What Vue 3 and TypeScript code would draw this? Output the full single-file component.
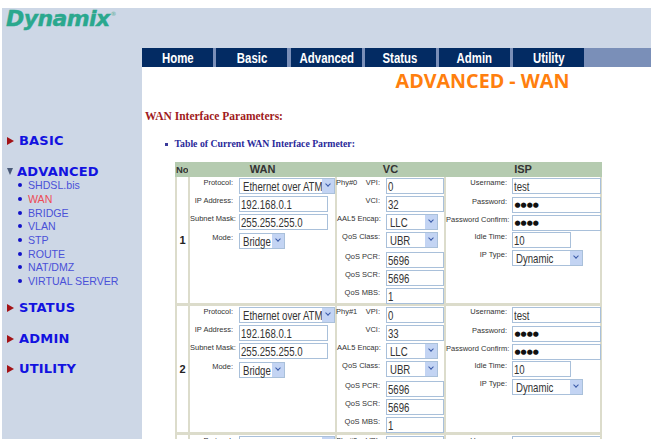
<script setup lang="ts">
interface Row { no: number; phy: string; vci: string }
const rows: Row[] = [
  { no: 1, phy: 'Phy#0', vci: '32' },
  { no: 2, phy: 'Phy#1', vci: '33' }
]
const tabs = ['Home', 'Basic', 'Advanced', 'Status', 'Admin', 'Utility']
const sub = ['SHDSL.bis', 'WAN', 'BRIDGE', 'VLAN', 'STP', 'ROUTE', 'NAT/DMZ', 'VIRTUAL SERVER']
</script>

<template>
  <div class="page">
    <aside class="side">
      <div class="logo">Dynamix<sup>®</sup></div>
      <nav class="menu">
        <div class="group"><span class="tri"></span>BASIC</div>
        <div class="group open"><span class="tri down"></span>ADVANCED</div>
        <ul class="sub">
          <li v-for="s in sub" :key="s" :class="{ active: s === 'WAN' }"><span class="dot"></span>{{ s }}</li>
        </ul>
        <div class="group after"><span class="tri"></span>STATUS</div>
        <div class="group"><span class="tri"></span>ADMIN</div>
        <div class="group"><span class="tri"></span>UTILITY</div>
      </nav>
    </aside>
    <main class="main">
      <div class="topband"></div>
      <div class="tabs">
        <div v-for="t in tabs" :key="t" class="tab"><span>{{ t }}</span></div>
      </div>
      <h1 class="title">ADVANCED - WAN</h1>
      <h2 class="section">WAN Interface Parameters:</h2>
      <h3 class="subhead"><span class="sq"></span>Table of Current WAN Interface Parmeter:</h3>
      <div class="grid">
        <div class="th no">No</div>
        <div class="th">WAN</div>
        <div class="th">VC</div>
        <div class="th">ISP</div>
        <template v-for="r in rows" :key="r.no">
          <div class="cell num">{{ r.no }}</div>
          <div class="cell wan">
            <label>Protocol:</label><div class="sel w-proto"><span class="val">Ethernet over ATM</span><i></i></div>
            <label>IP Address:</label><div class="inp w-ip"><span class="val">192.168.0.1</span></div>
            <label>Subnet Mask:</label><div class="inp w-ip"><span class="val">255.255.255.0</span></div>
            <label>Mode:</label><div class="sel w-mode"><span class="val">Bridge</span><i></i></div>
          </div>
          <div class="cell vc">
            <label><span class="phy">{{ r.phy }}</span>VPI:</label><div class="inp w-vc"><span class="val">0</span></div>
            <label>VCI:</label><div class="inp w-vc"><span class="val">{{ r.vci }}</span></div>
            <label>AAL5 Encap:</label><div class="sel w-enc"><span class="val">LLC</span><i></i></div>
            <label>QoS Class:</label><div class="sel w-enc"><span class="val">UBR</span><i></i></div>
            <label>QoS PCR:</label><div class="inp w-vc"><span class="val">5696</span></div>
            <label>QoS SCR:</label><div class="inp w-vc"><span class="val">5696</span></div>
            <label>QoS MBS:</label><div class="inp w-vc"><span class="val">1</span></div>
          </div>
          <div class="cell isp">
            <label>Username:</label><div class="inp w-isp"><span class="val">test</span></div>
            <label>Password:</label><div class="inp w-isp pw">●●●●</div>
            <label>Password Confirm:</label><div class="inp w-isp pw">●●●●</div>
            <label>Idle Time:</label><div class="inp w-idle"><span class="val">10</span></div>
            <label>IP Type:</label><div class="sel w-type"><span class="val">Dynamic</span><i></i></div>
          </div>
        </template>
        <div class="cell num stub"></div>
        <div class="cell wan stub">
          <label>Protocol:</label><div class="sel w-proto"><i></i></div>
        </div>
        <div class="cell vc stub">
          <label><span class="phy">Phy#2</span>VPI:</label><div class="inp w-vc"></div>
        </div>
        <div class="cell isp stub">
          <label>Username:</label><div class="inp w-isp"></div>
        </div>
      </div>
    </main>
  </div>
</template>

<style>
html, body { margin: 0; background: #fff; overflow: hidden; }
</style>

<style scoped>
.page {
  width: 651px;
  height: 439px;
  display: flex;
  padding: 8px 0 0 2px;
  box-sizing: border-box;
  overflow: hidden;
  font-family: "Liberation Sans", Arial, sans-serif;
}
.side { width: 140px; height: 431px; background: #cdd7e6; flex: none; }
.logo {
  font: italic 700 22px/22px "DejaVu Sans", sans-serif;
  color: #2aa88e;
  -webkit-text-stroke: 0.4px #2aa88e;
  padding-left: 4px;
  letter-spacing: -0.6px;
}
.logo sup { font-size: 6px; color: #7fb9ad; vertical-align: 10px; line-height: 0; margin-left: 1px; -webkit-text-stroke: 0; }
.menu { padding-top: 103px; }
.group {
  display: flex;
  align-items: center;
  height: 16px;
  margin-bottom: 14.5px;
  padding-left: 5px;
  font: 700 13px/16px "DejaVu Sans", sans-serif;
  color: #1212e0;
  letter-spacing: 0.2px;
}
.group.open { margin-bottom: 0; }
.group.after { margin-top: 12px; }
.tri {
  width: 0; height: 0;
  border-left: 7px solid #a31216;
  border-top: 4px solid transparent;
  border-bottom: 4px solid transparent;
  margin-right: 5px;
}
.tri.down {
  border-left: 3.5px solid transparent;
  border-right: 3.5px solid transparent;
  border-top: 7px solid #4a5a78;
  border-bottom: 0;
  margin-right: 4px;
}
.sub { list-style: none; margin: -1px 0 0; padding: 0 0 0 16px; }
.sub li {
  display: flex;
  align-items: center;
  height: 13.7px;
  font-size: 10.6px;
  color: #4a50d8;
}
.sub li.active { color: #ee4b55; }
.dot { width: 4px; height: 4px; border-radius: 50%; background: #1212c8; margin-right: 6px; flex: none; }
.main { flex: 1; min-width: 0; overflow: hidden; height: 431px; }
.topband { height: 40px; background: #cdd7e6; }
.tabs { display: flex; gap: 3.3px; height: 19px; background: #7a8fb8; }
.tab {
  width: 71px;
  background: #032b63;
  color: #fff;
  text-align: center;
  font: 700 15px/19px "Liberation Sans", sans-serif;
}
.tab span { display: inline-block; transform: scaleX(0.76); }
.title {
  margin: 0;
  padding: 4px 0 0 172px;
  height: 28px;
  box-sizing: border-box;
  text-align: center;
  font: 700 19.7px/20px "Open Sans", sans-serif;
  color: #ff7f0e;
}
.section {
  margin: 14px 0 0 3px;
  font: 700 11.5px/14px "Liberation Serif", serif;
  color: #a01a20;
}
.subhead {
  display: flex;
  align-items: center;
  margin: 15px 0 0 22.5px;
  font: 700 9.75px/12px "Liberation Serif", serif;
  color: #2a2a9a;
}
.sq { width: 3px; height: 3px; background: #3a3a9a; margin-right: 7px; }
.grid {
  display: grid;
  grid-template-columns: 11px 145px 107px 154px;
  grid-template-rows: 15px 129px 129px 30px;
  column-gap: 2px;
  margin: 12px 0 0 33px;
  width: 427px;
  box-sizing: border-box;
  padding: 0 2px;
  background: #dcdccb;
  color: #222;
}
.th {
  background: #b5cbb0;
  color: #333;
  font-size: 11px;
  font-weight: 700;
  line-height: 15px;
  text-align: center;
  margin: 0 -2px;
  min-width: 0;
}
.th.no { font-size: 9.5px; white-space: nowrap; margin-left: -2px; text-align: left; padding-left: 1px; }
.cell { background: #fff; margin-bottom: 3px; min-width: 0; }
.num { display: flex; align-items: center; justify-content: center; font-size: 11px; font-weight: 700; color: #222; }
.wan, .vc, .isp { display: grid; align-content: start; align-items: start; }
.wan { grid-template-columns: 43px 96px; column-gap: 6px; grid-template-rows: 18px 18px 19px 18px; }
.vc { grid-template-columns: 43px 58px; column-gap: 6px; grid-template-rows: 18px 17.5px 18.5px 20px 17.5px 18px 18px; }
.isp { grid-template-columns: 61px 89px; column-gap: 4.5px; grid-template-rows: 18.7px 18px 17.3px 18.5px 18px; }
label { text-align: right; white-space: nowrap; line-height: 12px; font-size: 7.5px; color: #333; }
.phy { float: left; margin-left: -1px; }
.inp, .sel {
  height: 16px;
  box-sizing: border-box;
  margin-top: 1px;
  border: 1px solid #a9c0da;
  background: #fff;
  font-size: 13px;
  line-height: 16px;
  padding-left: 1px;
  color: #333;
  white-space: nowrap;
  position: relative;
}
.sel { padding-left: 3px; line-height: 15px; }
.val { display: inline-block; transform: scaleX(0.74); transform-origin: left center; }
.sel i {
  position: absolute;
  right: 0; top: 0; bottom: 0;
  width: 12px;
  background: #c3d4f3;
}
.sel i::after {
  content: "";
  position: absolute;
  left: 4px; top: 3px;
  width: 3px; height: 3px;
  border-right: 1.5px solid #3a5aa8;
  border-bottom: 1.5px solid #3a5aa8;
  transform: rotate(45deg);
}
.pw { font: 7px/14px "DejaVu Sans", sans-serif; color: #111; padding-left: 2px; }
.w-proto { width: 96px; }
.w-ip { width: 89px; }
.w-mode { width: 46px; }
.w-vc { width: 58px; }
.w-enc { width: 52px; }
.w-isp { width: 89px; }
.w-idle { width: 59px; }
.w-type { width: 71px; }
.stub { overflow: hidden; margin-bottom: 0; }
</style>
